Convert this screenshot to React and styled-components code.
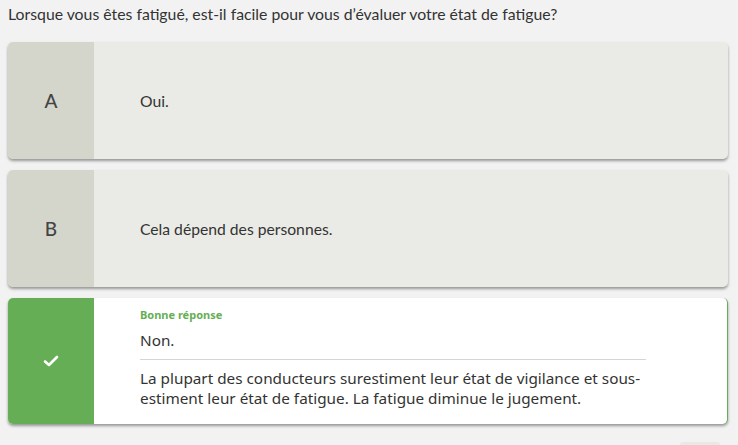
import React from 'react'
import styled, {createGlobalStyle} from 'styled-components';

const GlobalStyle = createGlobalStyle`
  body {
    margin: 0;
    background-color: #F2F2F2;
    font-family: Lato, "Liberation Sans", sans-serif;
    color: #333333;
  }
`;

const Page = styled.div`
  padding: 4px 10px 0 8px;
`;

const Question = styled.p`
  margin: 0 0 18px 0;
  font-size: 15.8px;
  line-height: 20px;
  color: #333;
`;

const List = styled.div`
  display: flex;
  flex-direction: column;
  gap: 11px;
`;

const Card = styled.div`
  display: flex;
  min-height: ${p => p.correct ? 126 : 117}px;
  border-radius: 5px;
  overflow: hidden;
  background-color: ${p => p.correct ? '#FFFFFF' : '#EAEBE6'};
  border-right: ${p => p.correct ? '1px solid #66AE55' : 'none'};
  box-shadow: 0px 2px 3px 0px rgba(0,0,0,0.38);
`;

const Letter = styled.div`
  width: 86px;
  flex-shrink: 0;
  display: flex;
  justify-content: center;
  align-items: center;
  background-color: ${p => p.correct ? '#66AE55' : '#D4D6CC'};
  color: #444;
  font-size: 19px;
  font-weight: 500;
`;

const Body = styled.div`
  flex: 1;
  display: flex;
  flex-direction: column;
  justify-content: center;
  padding-left: 46px;
  font-size: 15.7px;
  color: #333;
`;

const CorrectBody = styled.div`
  flex: 1;
  padding: 10px 0 0 46px;
  font-family: "Noto Sans", "Open Sans", sans-serif;
`;

const Label = styled.div`
  font-size: 11px;
  font-weight: 700;
  color: #66AE55;
  line-height: 14px;
`;

const Answer = styled.div`
  font-size: 15.3px;
  color: #333;
  margin-top: 8px;
  padding-bottom: 9px;
  width: 506px;
  border-bottom: 1px solid #D6D6D0;
`;

const Explain = styled.div`
  width: 506px;
  font-size: 15.3px;
  line-height: 20px;
  color: #333;
  margin-top: 8px;
`;

const Footer = styled.div`
  display: flex;
  justify-content: flex-end;
  margin-top: 18px;
  padding-right: 8px;
`;

const NextButton = styled.div`
  width: 40px;
  height: 30px;
  border-radius: 3px;
  background-color: #E8E8E4;
`;

const Check = () => (
    <svg width="16" height="14" viewBox="0 0 16 14">
        <path d="M2 7.5 L6 11 L14 3" fill="none" stroke="#FFFFFF" strokeWidth="2.6" strokeLinecap="round" strokeLinejoin="round"/>
    </svg>
);

const App = () => (
    <Page>
        <GlobalStyle/>
        <Question>Lorsque vous êtes fatigué, est-il facile pour vous d’évaluer votre état de fatigue?</Question>
        <List>
            <Card>
                <Letter>A</Letter>
                <Body>Oui.</Body>
            </Card>
            <Card>
                <Letter>B</Letter>
                <Body>Cela dépend des personnes.</Body>
            </Card>
            <Card correct>
                <Letter correct><Check/></Letter>
                <CorrectBody>
                    <Label>Bonne réponse</Label>
                    <Answer>Non.</Answer>
                    <Explain>La plupart des conducteurs surestiment leur état de vigilance et sous-estiment leur état de fatigue. La fatigue diminue le jugement.</Explain>
                </CorrectBody>
            </Card>
        </List>
        <Footer><NextButton/></Footer>
    </Page>
);

export default App
